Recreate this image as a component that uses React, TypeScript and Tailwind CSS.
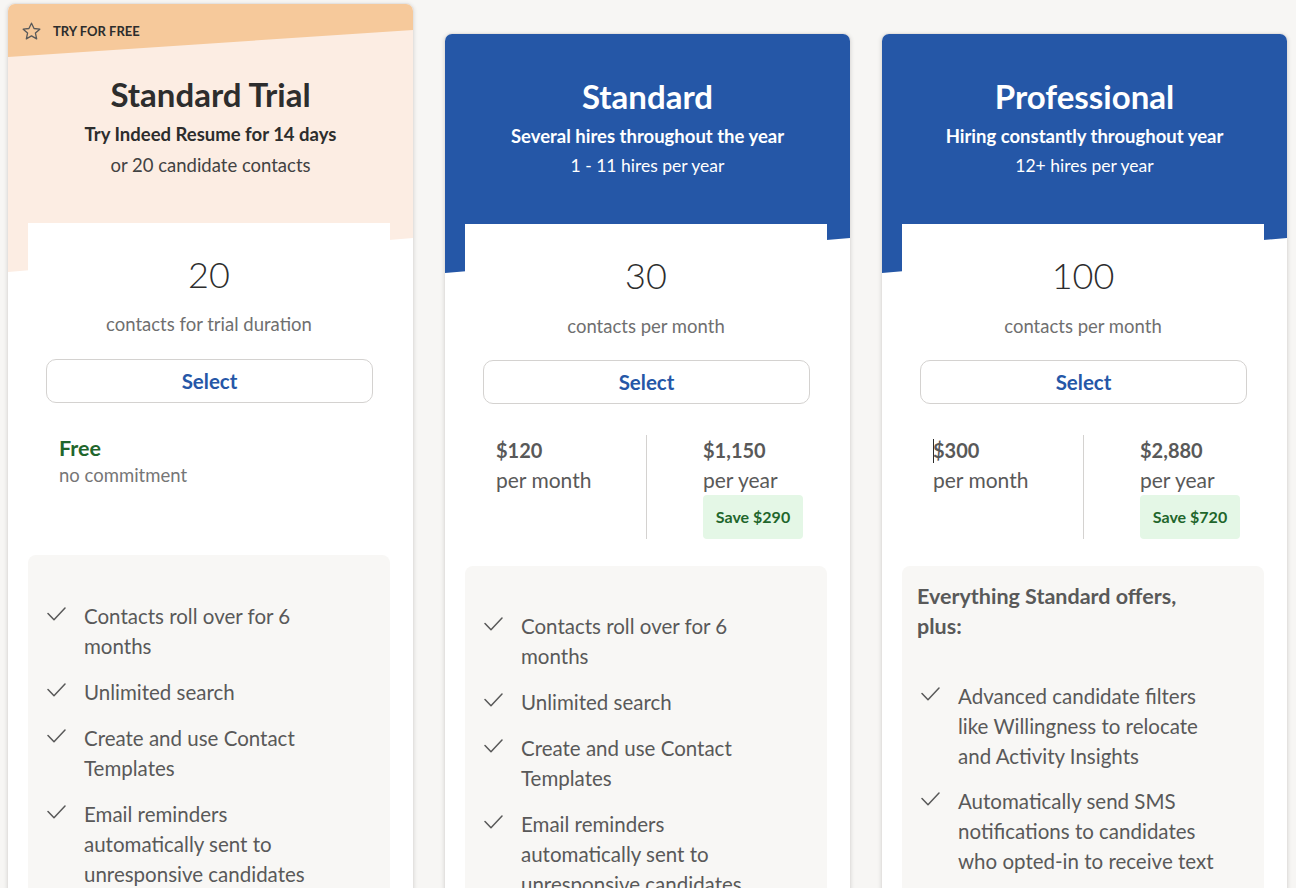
import React from "react";

const Check = () => (
  <svg width="19" height="14" viewBox="0 0 19 14" fill="none" stroke="#595959" strokeWidth="1.5" strokeLinecap="round" strokeLinejoin="round" className="shrink-0 mt-[6px]">
    <path d="M1 6.5 L7 12.8 L18 1" />
  </svg>
);

const Star = () => (
  <svg width="21" height="21" viewBox="0 0 24 24" fill="none" stroke="#595959" strokeWidth="1.5" strokeLinejoin="round">
    <path d="M12 2.5 L14.9 8.6 L21.5 9.3 L16.5 13.8 L17.9 20.4 L12 17 L6.1 20.4 L7.5 13.8 L2.5 9.3 L9.1 8.6 Z" />
  </svg>
);

type Item = React.ReactNode;

const Feature = ({ children, first }: { children: Item; first?: boolean }) => (
  <li className={`flex gap-[18px] ${first ? "" : "mt-[16px]"}`}>
    <Check />
    <span className="whitespace-nowrap text-[20.5px] leading-[30px] text-[#595959]">{children}</span>
  </li>
);

const standardFeatures = (
  <ul>
    <Feature first>
      Contacts roll over for 6<br />months
    </Feature>
    <Feature>Unlimited search</Feature>
    <Feature>
      Create and use Contact<br />Templates
    </Feature>
    <Feature>
      Email reminders<br />automatically sent to<br />unresponsive candidates
    </Feature>
  </ul>
);

const SelectButton = () => (
  <div className="ml-[18px] mr-[17px]">
    <button className="h-[44px] w-full rounded-[10px] border border-[#d4d2d0] bg-white text-[20.5px] font-bold text-[#2557a7]">
      Select
    </button>
  </div>
);

const Contacts = ({ n, label }: { n: string; label: string }) => (
  <>
    <div className="text-center text-[36px] leading-[44px] font-light text-[#2d2d2d]">{n}</div>
    <div className="mt-[16px] text-center text-[18.5px] leading-[26px] text-[#6f6f6f]">{label}</div>
    <div className="mt-[21px]">
      <SelectButton />
    </div>
  </>
);

const Prices = ({
  month,
  year,
  save,
  caret,
}: {
  month: string;
  year: string;
  save: string;
  caret?: boolean;
}) => (
  <div className="mt-[31px] grid grid-cols-2">
    <div className="pl-[31px]">
      <div className="text-[20px] leading-[30px] font-bold text-[#595959]">
        {caret && <span className="inline-block w-px h-[24px] bg-[#2d2d2d] align-[-5px] -mr-px" />}
        {month}
      </div>
      <div className="text-[21px] leading-[30px] text-[#595959]">per month</div>
    </div>
    <div className="border-l border-[#d4d2d0] pl-[56px]">
      <div className="text-[20px] leading-[30px] font-bold text-[#595959]">{year}</div>
      <div className="text-[21px] leading-[30px] text-[#595959]">per year</div>
      <div className="flex h-[44px] w-[100px] items-center justify-center rounded-[4px] bg-[#e4f7e6] text-[16px] font-bold text-[#1f662c]">
        {save}
      </div>
    </div>
  </div>
);

const BlueHeader = ({ title, sub, hires }: { title: string; sub: string; hires: string }) => (
  <div className="h-[239px] bg-[#2557a7] pt-[42px] text-center text-white [clip-path:polygon(0_0,100%_0,100%_calc(100%_-_35px),0_100%)]">
    <h2 className="text-[33px] leading-[40px] font-bold">{title}</h2>
    <p className="mt-[6px] text-[18.5px] leading-[28px] font-bold">{sub}</p>
    <p className="text-[17.5px] leading-[32px]">{hires}</p>
  </div>
);

const cardCls =
  "w-[407px] shrink-0 overflow-hidden rounded-lg border border-[#e4e2e0] bg-white shadow-[0_1px_4px_rgba(0,0,0,0.12)]";

export default function App() {
  return (
    <div className="h-[888px] overflow-hidden bg-[#f7f6f4] [font-family:Lato,'Noto_Sans',sans-serif]">
      <div className="flex items-start gap-[30px] pl-[7px] pt-[3px]">
        {/* Trial */}
        <div className={cardCls + " h-[1000px]"}>
          <div className="h-[268px] bg-[#fcede3] [clip-path:polygon(0_0,100%_0,100%_calc(100%_-_34px),0_100%)]">
            <div className="flex h-[53px] items-start gap-[11px] bg-[#f6c99b] pl-[13px] pt-[17px] [clip-path:polygon(0_0,100%_0,100%_26px,0_100%)]">
              <Star />
              <span className="text-[13px] leading-[21px] font-bold text-[#2d2d2d]">TRY FOR FREE</span>
            </div>
            <h2 className="mt-[17px] text-center text-[33px] leading-[40px] font-bold text-[#2d2d2d]">Standard Trial</h2>
            <p className="mt-[6px] text-center text-[18.5px] leading-[28px] font-bold text-[#2d2d2d]">
              Try Indeed Resume for 14 days
            </p>
            <p className="text-center text-[18.5px] leading-[34px] text-[#424242]">or 20 candidate contacts</p>
          </div>
          <div className="relative -mt-[49px] ml-[20px] mr-[23px] bg-white pt-[29px]">
            <div className="text-center text-[36px] leading-[44px] font-light text-[#2d2d2d]">20</div>
            <div className="mt-[15px] text-center text-[18.5px] leading-[26px] text-[#6f6f6f]">contacts for trial duration</div>
            <div className="mt-[22px]">
              <SelectButton />
            </div>
            <div className="mt-[30px] h-[94px] pl-[31px]">
              <div className="text-[21.5px] leading-[30px] font-bold text-[#1f662c]">Free</div>
              <div className="text-[18.5px] leading-[24px] text-[#767676]">no commitment</div>
            </div>
            <div className="mt-[28px] rounded-lg bg-[#f8f7f5] pb-[30px] pl-[19px] pt-[46px]">{standardFeatures}</div>
          </div>
        </div>

        {/* Standard */}
        <div className={cardCls + " mt-[30px] h-[1000px]"}>
          <BlueHeader title="Standard" sub="Several hires throughout the year" hires="1 - 11 hires per year" />
          <div className="relative -mt-[49px] ml-[20px] mr-[23px] bg-white pt-[29px]">
            <Contacts n="30" label="contacts per month" />
            <Prices month="$120" year="$1,150" save="Save $290" />
            <div className="mt-[27px] rounded-lg bg-[#f8f7f5] pb-[30px] pl-[19px] pt-[45px]">{standardFeatures}</div>
          </div>
        </div>

        {/* Professional */}
        <div className={cardCls + " mt-[30px] h-[1000px]"}>
          <BlueHeader title="Professional" sub="Hiring constantly throughout year" hires="12+ hires per year" />
          <div className="relative -mt-[49px] ml-[20px] mr-[23px] bg-white pt-[29px]">
            <Contacts n="100" label="contacts per month" />
            <Prices month="$300" year="$2,880" save="Save $720" caret />
            <div className="mt-[27px] rounded-lg bg-[#f8f7f5] pb-[30px] pl-[15px] pt-[15px]">
              <div className="text-[21.5px] leading-[30px] font-bold text-[#595959]">
                Everything Standard offers,
                <br />
                plus:
              </div>
              <ul className="mt-[40px] pl-[4px]">
                <li className="flex gap-[18px]">
                  <Check />
                  <span className="whitespace-nowrap text-[20.5px] leading-[30px] text-[#595959]">
                    Advanced candidate filters
                    <br />
                    like Willingness to relocate
                    <br />
                    and Activity Insights
                  </span>
                </li>
                <li className="mt-[15px] flex gap-[18px]">
                  <Check />
                  <span className="whitespace-nowrap text-[20.5px] leading-[30px] text-[#595959]">
                    Automatically send SMS
                    <br />
                    notifications to candidates
                    <br />
                    who opted-in to receive text
                    <br />
                    messages
                  </span>
                </li>
              </ul>
            </div>
          </div>
        </div>
      </div>
    </div>
  );
}
